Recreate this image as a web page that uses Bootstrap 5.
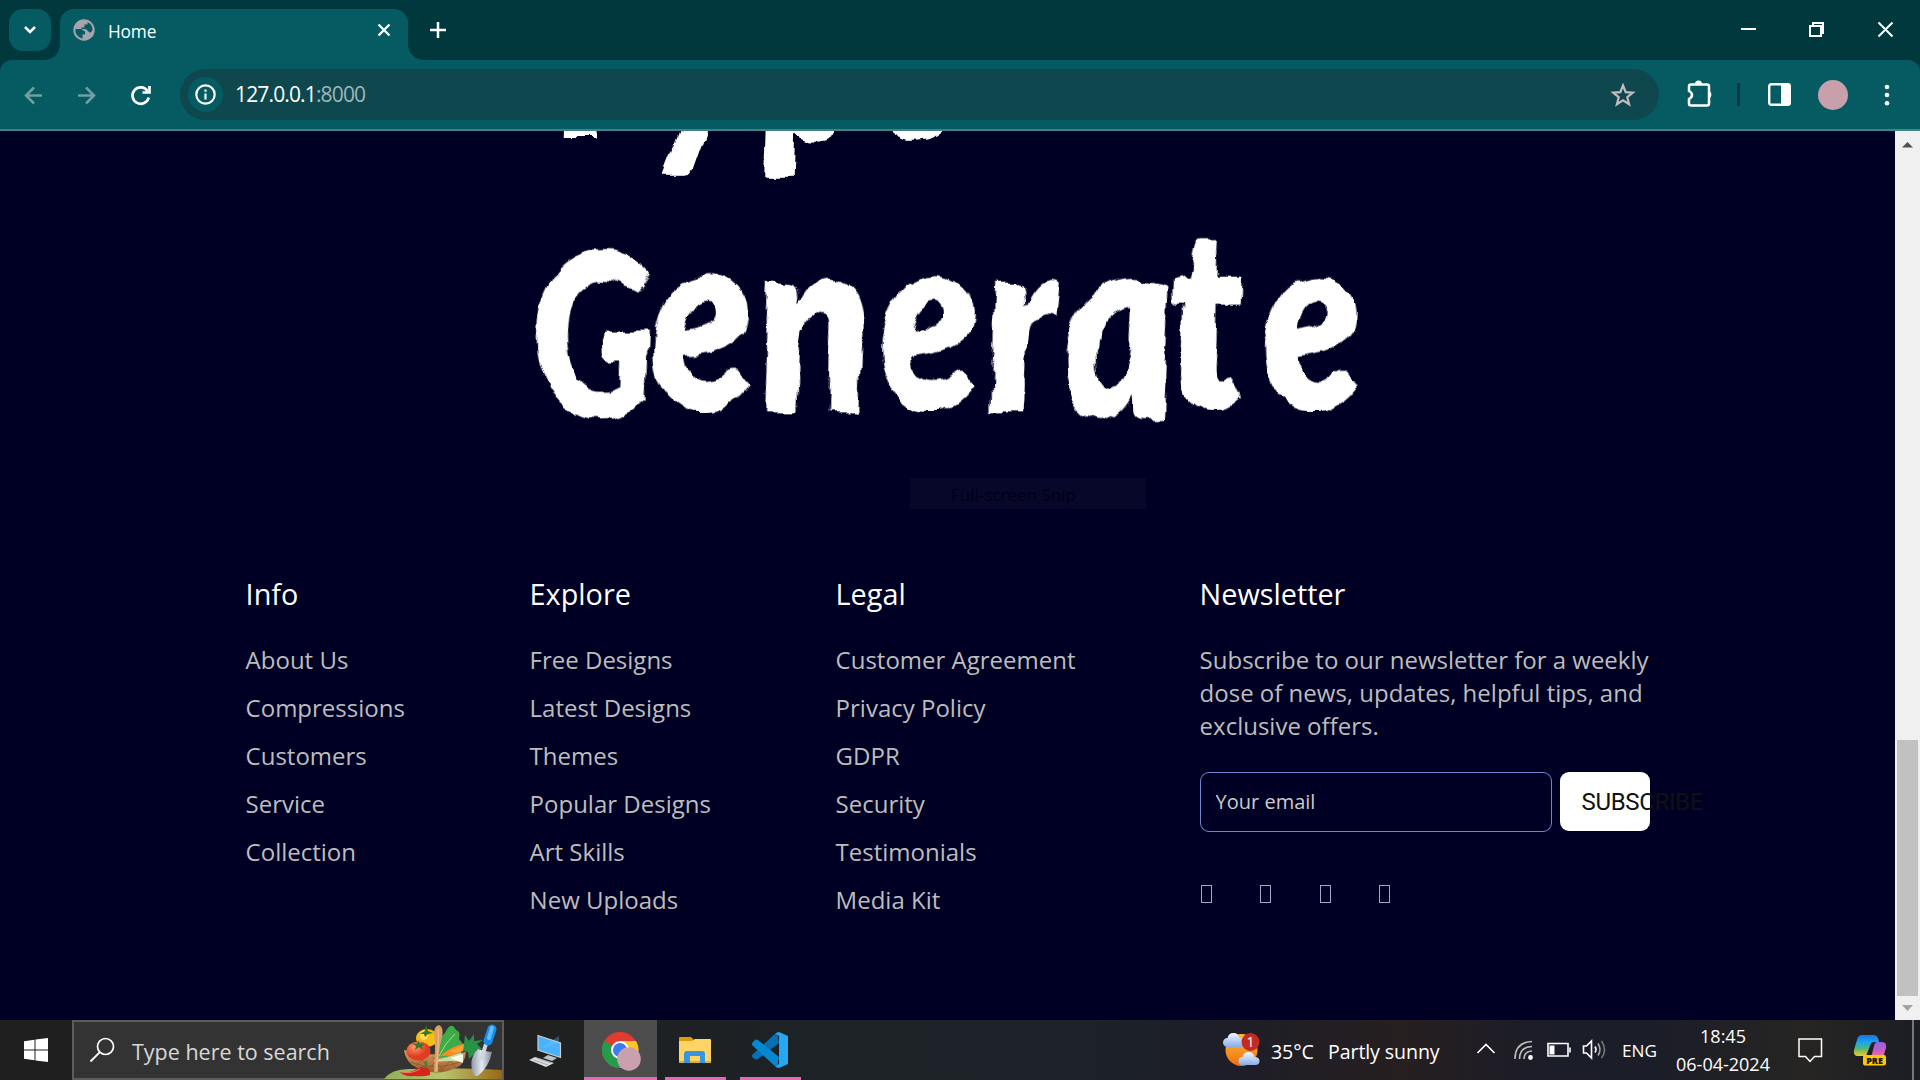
<!DOCTYPE html>
<html lang="en">
<head>
<meta charset="utf-8">
<title>Home</title>
<link href="https://cdn.jsdelivr.net/npm/bootstrap@5.3.0/dist/css/bootstrap.min.css" rel="stylesheet">
<script src="https://cdn.jsdelivr.net/npm/bootstrap@5.3.0/dist/js/bootstrap.bundle.min.js"></script>
<style>
body{width:1920px;height:1080px;font-family:"Open Sans","Noto Sans",sans-serif;background:#000024}
svg{display:block;flex:none;overflow:visible}
.tabstrip{height:60px;background:#01383d;padding-left:9px}
.tab-search{width:42px;height:42px;border-radius:14px;background:#055b61;margin-top:9px}
.tab-active{width:348px;height:51px;margin:9px 0 0 9px;border-radius:14px 14px 0 0;background:#055b61;padding:0 17px 0 13px;font-size:17.3px}
.tab-active::before,.tab-active::after{content:"";position:absolute;bottom:0;width:15px;height:15px}
.tab-active::before{left:-15px;background:radial-gradient(circle at 0 0,transparent 14.5px,#055b61 15px)}
.tab-active::after{right:-15px;background:radial-gradient(circle at 100% 0,transparent 14.5px,#055b61 15px)}
.globe{margin-top:10px}
.tab-name{margin:10px 0 0 13px;letter-spacing:-.15px}
.tab-close{margin-top:14px}
.new-tab{margin:22px 0 0 22px}
.toolbar-wrap{background:#01383d}
.toolbar{height:71px;background:#055b61;border-bottom:2px solid #3e8387;border-radius:12px 12px 0 0;padding-left:24px}
.omnibox{width:1479px;height:51px;border-radius:26px;background:#0e484e;margin-left:28px;padding:0 24px 0 8px}
.site-info{width:35px;height:35px;border-radius:50%;background:#055b61}
.url{font-size:21px;margin-left:12px;letter-spacing:-.85px}
.port{color:#9fb6b8}
.puzzle{margin-left:28px}
.panel-icon{margin-left:28px}
.dots{margin-left:36px}
.avatar{width:30px;height:30px;border-radius:50%;background:#c8a0ac;margin-left:27px}
.divider{width:3px;height:23px;background:#01383d;border-radius:1px;margin-left:24px}
.viewport{height:889px}
.page{width:1895px;background:#000024;overflow:hidden}
.hero{overflow:hidden}
.brush{font-family:Lato,sans-serif;font-weight:800;font-style:italic;fill:#fff}
.scrollbar{width:25px;background:#f0f0f0;padding:10px 2px 9px}
.thumb{width:21px;height:256px;background:#c1c1c1}
.arrow-down{margin-top:9px}
.snip{width:236px;height:31px;margin-left:910px;background:#070729;color:#000018;font-size:17px;padding-left:41px;line-height:33px}
.site-footer{padding:64px 0 0 245.6px}
.site-footer h5{font-size:28.8px;line-height:41px;font-weight:400;color:#fff;margin:0 0 29px}
.site-footer li{font-size:24px;line-height:33px;margin-bottom:15px;color:#bdbdbd}
.f-info{width:284px}.f-explore{width:306px}.f-legal{width:364px}.f-news{width:451px}
.news-text{font-size:24px;line-height:33px;color:#bdbdbd;margin-bottom:30px;white-space:nowrap}
.email-box{width:352px;height:60px;border:1px solid #7186d0;border-radius:9px;background:transparent;padding:0 15px 2px;font-size:20px;color:#ccc}
.email-box::placeholder{color:#ccc;opacity:1}
.btn-sub{width:90px;height:59px;border-radius:9px;background:#fff;color:#111;font-family:Roboto,sans-serif;font-size:24px;padding:0 0 0 22px;border:0;text-align:left;white-space:nowrap;line-height:61px;letter-spacing:-.35px}
.social{gap:48.4px;margin:53px 0 0 1.4px}
.social i{width:11px;height:18px;border:1px solid #a5a5c4}
.taskbar{height:60px;background:linear-gradient(90deg,#1f1f1f 0%,#202020 28%,#1d2226 40%,#1c2228 57%,#1d1e29 63%,#261f20 73%,#1c1d28 80%,#1b1d28 86%,#262523 94%,#1c1d25 100%);color:#fff}
.start{margin-left:24px}
.search-box{width:432px;height:60px;background:#333;border:2px solid #5c5c5c;margin-left:24px;padding-left:15px;font-size:21.5px;color:#d8d8d8}
.search-text{margin-left:17px;padding-top:4px}
.app{height:60px;border-bottom:3px solid transparent}
.app-on{border-color:#e568b4}
.app-wide{width:73px}.app-slim{width:61px}
.pc{width:80px}
.focused{background:#4d4d4d}
.explorer{margin-left:8px}
.code{margin-left:14px}
.tray{font-size:19.6px}
.deg{width:57px;margin-left:10px;padding-top:3px;letter-spacing:-.1px}
.sunny{width:150px;padding-top:3px;letter-spacing:-.1px}
.lang{margin-left:15px;width:46px;font-size:17.2px;padding-top:1px}
.clock{width:110px;font-size:18px;line-height:28px}
.note{margin-left:20px}
.copilot{margin-left:32px}
.show-edge{width:2px;height:60px;background:#777;margin:0 6px 0 25px}
</style>
</head>
<body class="d-flex flex-column overflow-hidden">
<svg width="0" height="0" class="position-absolute"><filter id="dry" x="-5%" y="-5%" width="110%" height="110%"><feTurbulence type="fractalNoise" baseFrequency=".04 .02" numOctaves="4" seed="7"/><feDisplacementMap in="SourceGraphic" scale="14" xChannelSelector="R" yChannelSelector="G"/></filter></svg>

<header class="tabstrip d-flex">
  <div class="tab-search d-flex justify-content-center align-items-center"><svg width="14" height="10" viewBox="0 0 14 10"><path d="M2 2l5 5 5-5" fill="none" stroke="#fff" stroke-width="2.5"/></svg></div>
  <div class="tab-active position-relative d-flex text-white">
    <svg class="globe" width="22" height="22" viewBox="0 0 22 22"><circle cx="11" cy="11" r="10.700" fill="#a7a3ad"/><path d="M2.500 10h5.500l4 2.500v3H9.500v4C5 18.500 2 15 2.500 10zM8.500 8.500h3v-3h3V3.200A8.400 8.400 0 0 1 19.600 11c-1.200 2-2 2.500-3.100 2.500-1.500-1-2.500-3.500-4.500-3.500H8.500z" fill="#055b61"/></svg>
    <span class="tab-name">Home</span>
    <svg class="ms-auto tab-close" width="14" height="14" viewBox="0 0 14 14"><path d="M1.500 1.500l11 11m0-11l-11 11" stroke="#fff" stroke-width="2.300"/></svg>
  </div>
  <svg class="new-tab" width="16" height="16" viewBox="0 0 16 16"><path d="M8 0v16M0 8h16" stroke="#fff" stroke-width="2.500"/></svg>
  <svg class="ms-auto" width="179" height="60" viewBox="1741 0 179 60" fill="none" stroke="#fff" stroke-width="2"><path d="M1741 29h15M1810 26h11v10h-11zM1813 26v-3h10v10h-2M1878.500 22.500l14 14m0-14l-14 14"/></svg>
</header>
<div class="toolbar-wrap"><div class="toolbar d-flex align-items-center">
  <svg width="128" height="24" viewBox="24 82 128 24" fill="none" stroke-width="2.500"><path d="M42 94.500H26M34 86.500l-8 8 8 8M78 94.500h16M86 86.500l8 8-8 8" stroke="#6fa0a4"/><path d="M147.500 90a8.200 8.200 0 1 0 1.200 6.500M149.500 85v6.500h-7" stroke="#fff" stroke-width="2.700"/></svg>
  <div class="omnibox d-flex align-items-center">
    <div class="site-info d-flex justify-content-center align-items-center"><svg width="21" height="21" viewBox="0 0 21 21"><circle cx="10.500" cy="10.500" r="9.200" fill="none" stroke="#fff" stroke-width="2.200"/><path d="M10.500 9.500v6M10.500 5.500v2.300" stroke="#fff" stroke-width="2.200"/></svg></div>
    <div class="url text-white">127.0.0.1<span class="port">:8000</span></div>
    <svg class="ms-auto" width="24" height="24" viewBox="0 0 24 24"><path d="M12 2.500l2.700 6.600 7.100.5-5.500 4.600 1.800 7-6.100-3.900-6.100 3.900 1.800-7-5.500-4.600 7.100-.5z" fill="none" stroke="#c4bcc0" stroke-width="2.200"/></svg>
  </div>
  <svg class="puzzle" width="26" height="26" viewBox="1687 82 26 26"><path d="M1691 84.500h16q2 0 2 2v17q0 2-2 2h-16q-2 0-2-2V99q3-1.500 3-4t-3-4v-4.500q0-2 2-2z" fill="none" stroke="#fff" stroke-width="2.500"/><path d="M1695 84a3.500 3.500 0 0 1 7 0zM1709 91a3.700 3.700 0 0 1 0 7z" fill="#fff"/></svg>
  <div class="divider"></div>
  <svg class="panel-icon" width="23" height="23" viewBox="0 0 23 23"><rect x="1.200" y="1.200" width="20.600" height="20.600" rx="2" fill="none" stroke="#fff" stroke-width="2.400"/><path d="M13 1h9v21h-9z" fill="#fff"/></svg>
  <div class="avatar"></div>
  <svg class="dots" width="6" height="22" viewBox="0 0 6 22" fill="#fff"><circle cx="3" cy="3" r="2.300"/><circle cx="3" cy="11" r="2.300"/><circle cx="3" cy="19.300" r="2.300"/></svg>
</div></div>

<div class="viewport d-flex">
  <main class="page">
    <svg class="hero" width="1895" height="347" viewBox="0 131 1895 347" role="img" aria-label="Type Generate">
      <g class="brush" filter="url(#dry)">
        <text transform="translate(0 138) skewX(4) scale(.82 1)" font-size="230" x="651 797 932 1063" y="0">Type</text>
        <text transform="translate(0 409) skewX(4) scale(.82 1)" font-size="253" x="652 799 930 1076 1207 1299 1431 1544" y="8 0 3 0 3 9 0 0"><tspan font-size="228">G</tspan>ener<tspan font-size="264">a</tspan>te</text>
      </g>
    </svg>
    <div class="snip">Full-screen Snip</div>
    <footer class="site-footer d-flex">
      <section class="f-info"><h5>Info</h5><ul class="list-unstyled"><li>About Us</li><li>Compressions</li><li>Customers</li><li>Service</li><li>Collection</li></ul></section>
      <section class="f-explore"><h5>Explore</h5><ul class="list-unstyled"><li>Free Designs</li><li>Latest Designs</li><li>Themes</li><li>Popular Designs</li><li>Art Skills</li><li>New Uploads</li></ul></section>
      <section class="f-legal"><h5>Legal</h5><ul class="list-unstyled"><li>Customer Agreement</li><li>Privacy Policy</li><li>GDPR</li><li>Security</li><li>Testimonials</li><li>Media Kit</li></ul></section>
      <section class="f-news"><h5>Newsletter</h5>
        <p class="news-text">Subscribe to our newsletter for a weekly<br>dose of news, updates, helpful tips, and<br>exclusive offers.</p>
        <form class="d-flex gap-2"><input class="email-box" type="email" placeholder="Your email"><button type="button" class="btn-sub">SUBSCRIBE</button></form>
        <div class="social d-flex"><i></i><i></i><i></i><i></i></div>
      </section>
    </footer>
  </main>
  <div class="scrollbar d-flex flex-column align-items-center">
    <svg width="11" height="7" viewBox="0 0 11 7"><path d="M0 6.500L5.500 1l5.500 5.500z" fill="#505050"/></svg>
    <div class="thumb mt-auto"></div>
    <svg class="arrow-down" width="11" height="6" viewBox="0 0 11 6"><path d="M0 0h11L5.500 6z" fill="#a3a3a3"/></svg>
  </div>
</div>

<footer class="taskbar d-flex align-items-center">
  <svg class="start" width="24" height="24" viewBox="0 0 24 24" fill="#fff"><path d="M0 3.200l10.500-1.400v9.700H0zM11.500 1.600L24 0v11.500H11.500zM0 12.500h10.500v9.700L0 20.800zM11.500 12.500H24V24l-12.500-1.600z"/></svg>
  <div class="search-box d-flex align-items-center">
    <svg width="26" height="26" viewBox="0 0 26 26"><circle cx="16.500" cy="9.500" r="8" fill="none" stroke="#fff" stroke-width="1.700"/><path d="M10.800 15.200L1.500 24.500" stroke="#fff" stroke-width="1.900"/></svg>
    <span class="search-text">Type here to search</span>
    <svg class="ms-auto" width="120" height="58" viewBox="382 1021 120 58">
      <defs><linearGradient id="hill"><stop stop-color="#8faf57"/><stop offset=".5" stop-color="#b9c46e"/><stop offset="1" stop-color="#9b6813"/></linearGradient><radialGradient id="tomato" cx=".35" cy=".3"><stop stop-color="#ff9a62"/><stop offset="1" stop-color="#df3c22"/></radialGradient><linearGradient id="bask" x2="0" y2="1"><stop stop-color="#d39a62"/><stop offset="1" stop-color="#9e6132"/></linearGradient><linearGradient id="steel"><stop stop-color="#8e98a8"/><stop offset=".5" stop-color="#e3e9ef"/><stop offset="1" stop-color="#7f8999"/></linearGradient></defs>
      <path d="M384 1079q8-11 28-10 40-2 90 1v9z" fill="url(#hill)"/>
      <path d="M404 1050q1 9 8 15 22 14 46 2 7-4 8-15-30 6-62-2z" fill="url(#bask)"/>
      <path d="M410 1062q25 10 53-1M416 1066l9-9m3 13l10-12m2 14l12-13m-32-2l10 14m3-14l10 14m5-13l8 9" stroke="#8c552d" stroke-width=".8" fill="none"/>
      <ellipse cx="427" cy="1038" rx="11" ry="9" fill="#f6bd18"/><ellipse cx="424" cy="1035" rx="4" ry="5" fill="#ffdc55"/><path d="M420 1034l5-3 1-6 2 6 5 2-5 1-3 3-1-3z" fill="#397a21"/>
      <path d="M437 1057q-2-16 8-24 6-13 11-3 5 1 3 9l4 5q-10 4-16 13z" fill="#3eab4b"/><path d="M439 1056q6-13 16-22" stroke="#a7df86" fill="none"/>
      <path d="M440 1056q12-10 26-13l3 4q-12 9-29 9z" fill="#ff8c1e"/><path d="M450 1051l17-7 4 4-14 5z" fill="#ffa13a"/><path d="M434 1060q14-2 27-8l2 10q-10-2-28 0z" fill="#c6dca0"/><path d="M450 1058l13-4v9z" fill="#f5ffe8"/>
      <path d="M464 1044l1-9 4 6 5-7v7l9-1-6 4 5 5-6 1 4 10-7-5-4 4-1-7-5-1z" fill="#289345"/>
      <ellipse cx="418.500" cy="1051" rx="12" ry="9.500" fill="url(#tomato)"/><path d="M412 1043l5 1 1-4 2 4 5-1-3 3 1 4-4-3-4 3 1-4z" fill="#37752c"/>
      <path d="M434 1072q2-34 0-38 0-8 5-9 5 2 3 12-4 14-4 35z" fill="#d99f66"/><path d="M438 1029q1 18-2 42" stroke="#f0c28c" fill="none"/>
      <path d="M400 1072q8 2 17-3 5-4 10-1 4 2 3 7-7 2-16 1-10 1-14-4z" fill="#d8221c"/><path d="M402 1072q10 2 18-3" stroke="#ff7a65" fill="none"/><path d="M424 1068q4-5 1-7" stroke="#38862b" stroke-width="2" fill="none"/>
      <path d="M478 1049q-10 10-5 24 2 6 7 1 9-8 12-22-7 0-14-3z" fill="url(#steel)"/><path d="M486 1044l-5 16" stroke="#cfd6df" stroke-width="4"/><path d="M492 1029l-4 12" stroke="#1b8bea" stroke-width="9" stroke-linecap="round"/><path d="M492 1028l-3 10" stroke="#5cc0ff" stroke-width="4" stroke-linecap="round"/>
    </svg>
  </div>
  <div class="app pc"><svg width="80" height="57" viewBox="504 1020 80 57"><path d="M538 1035.500l22.500 7.500v14.500l-22.500-7.500z" fill="#4ab2fb" stroke="#c6ced4" stroke-width="1.200"/><path d="M539 1049l20-13v7z" fill="#7fcaff" opacity=".3"/><path d="M548 1055l9 3-5 3-9-3z" fill="#b9c3c8"/><path d="M535 1057l19 6-8 4-17-7z" fill="#d9dde1"/><path d="M534 1060l14 5m-11-7l14 5" stroke="#8d9398" stroke-width=".7"/></svg></div>
  <div class="app app-on app-wide focused"><svg width="73" height="57" viewBox="584 1020 73 57"><circle cx="620" cy="1050" r="18" fill="#e33b2e"/><path d="M604.400 1041A18 18 0 0 0 620 1068l9-16-9-2z" fill="#259c4b"/><path d="M636 1041h-16l8 14-8 13a18 18 0 0 0 16-27z" fill="#fcc62b"/><circle cx="620" cy="1050" r="9" fill="#fff"/><circle cx="620" cy="1050" r="7" fill="#3a7df0"/><circle cx="629" cy="1059" r="11.800" fill="#c9a1ae"/></svg></div>
  <div class="app app-on app-slim explorer"><svg width="61" height="57" viewBox="665 1020 61 57"><path d="M679 1038q0-1 1-1h11l4 4-4 2h-12z" fill="#dd9b05"/><path d="M679 1041h13l3-2h15q1 0 1 1v22h-32z" fill="#fed467"/><path d="M679 1061h32v2h-32z" fill="#e0ac37"/><path d="M684 1063v-9q0-3 3-3h15q3 0 3 3v9h-5v-7h-10v7z" fill="#3794df"/></svg></div>
  <div class="app app-on app-slim code"><svg width="61" height="57" viewBox="740 1020 61 57"><path d="M777 1032l-24 22q-2 2 0 4l2 1q1 1 3 0l21-16z" fill="#0670b3"/><path d="M753 1042l2-2q1-1 3 0l21 17-2 11-24-22q-2-2 0-4z" fill="#0588d2"/><path d="M779 1032l9 4v28l-9 4q-2 0-3-2l3-2v-28l-3-2q1-2 3-2z" fill="#27a7f1"/></svg></div>
  <div class="tray d-flex align-items-center ms-auto">
    <svg width="37" height="36" viewBox="1223.500 1031 37 36"><defs><linearGradient id="cloud" x2="0" y2="1"><stop stop-color="#f2f7ff"/><stop offset="1" stop-color="#89ace7"/></linearGradient><linearGradient id="sun" x2="0" y2="1"><stop stop-color="#ffbd2e"/><stop offset="1" stop-color="#ef6f13"/></linearGradient></defs><circle cx="1241" cy="1049" r="16" fill="url(#sun)"/><path d="M1227 1046a4.500 4.500 0 0 1 0-9q1-5 6-5 5 0 6 5 5 0 5 4.500t-4 4.500z" fill="url(#cloud)"/><path d="M1242 1064a4 4 0 0 1 0-8q1-5 6-5t6 5q5 0 5 4t-4 4z" fill="url(#cloud)"/><circle cx="1250" cy="1041" r="9" fill="#c42b20"/><text x="1250" y="1046" font-size="14" text-anchor="middle" fill="#fff">1</text></svg>
    <span class="deg">35°C</span><span class="sunny">Partly sunny</span>
    <svg width="129" height="24" viewBox="1478 1039 129 24" fill="none" stroke="#fff" stroke-width="1.600"><path d="M1477.500 1054l8.500-8.500 8.500 8.500"/><path d="M1515 1060q0-17 17-17.500M1519.500 1060q0-12 12.500-12.500M1524 1060q0-7.500 8-8" stroke="#bbb"/><circle cx="1530.500" cy="1058.500" r="1.600" fill="#fff"/><path d="M1548 1044.500h20v12.500h-20zM1570 1048.500v5"/><path d="M1549.500 1046.500h5v9h-5z" fill="#fff" stroke="none"/><path d="M1583.500 1047h3l5-5v17l-5-5h-3zM1595 1047.500q2 3 0 6"/><path d="M1598 1044.500q4 6 0 12" stroke="#aaa"/><path d="M1601.500 1042q6 9 0 17" stroke="#777"/></svg>
    <span class="lang">ENG</span>
    <div class="clock text-center text-nowrap">18:45<br>06-04-2024</div>
    <svg class="note" width="24" height="26" viewBox="1798 1037 24 26"><path d="M1799 1039h22.500v17.500h-7l-4.500 5-4.500-5h-6.500z" fill="none" stroke="#fff" stroke-width="1.500"/></svg>
    <svg class="copilot" width="33" height="32" viewBox="1854 1035 33 32"><defs><linearGradient id="cop" x2="0" y2="1"><stop stop-color="#1b73e0"/><stop offset=".35" stop-color="#18a7f0"/><stop offset=".65" stop-color="#55b579"/><stop offset="1" stop-color="#f9cc1b"/></linearGradient><linearGradient id="cop2" x2="0" y2="1"><stop stop-color="#8c63e8"/><stop offset=".6" stop-color="#d45bc0"/><stop offset="1" stop-color="#fb8251"/></linearGradient></defs><path d="M1862 1036h12q4 0 5 7h-5q-3 0-4 4l-4 10h-8q-5 0-4-6l3-10q1-5 5-5z" fill="url(#cop)"/><path d="M1877 1043h5q5 0 4 6l-3 10h-12l3-12q1-4 3-4z" fill="url(#cop2)"/><rect x="1863" y="1056" width="23" height="10.500" rx="2" fill="#fdc70c"/><text x="1874.500" y="1064.500" font-size="9" font-weight="800" text-anchor="middle" fill="#111">PRE</text></svg>
    <div class="show-edge"></div>
  </div>
</footer>
</body>
</html>
